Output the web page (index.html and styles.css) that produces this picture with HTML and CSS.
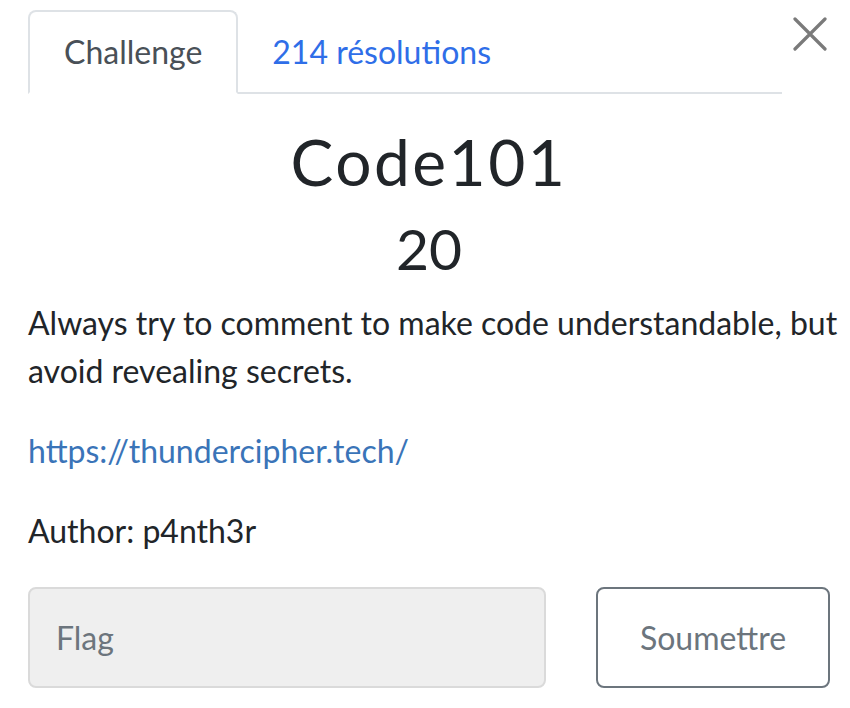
FILE: index.html
```html
<!DOCTYPE html>
<html lang="fr">
<head>
<meta charset="utf-8">
<title>Code101</title>
<link rel="stylesheet" href="styles.css">
</head>
<body>
<div class="modal">
  <div class="header">
    <nav class="tabs">
      <span class="tab active">Challenge</span>
      <span class="tab link">214 résolutions</span>
    </nav>
    <button class="close" aria-label="Close">
      <svg width="34" height="34" viewBox="0 0 34 34"><path d="M2 2 L32 32 M32 2 L2 32" stroke="#7a7a7a" stroke-width="3.2" stroke-linecap="round"/></svg>
    </button>
  </div>
  <h2 class="title">Code101</h2>
  <h3 class="value">20</h3>
  <div class="desc">
    <p>Always try to comment to make code understandable, but avoid revealing secrets.</p>
    <p><a href="#">https://thundercipher.tech/</a></p>
    <p>Author: p4nth3r</p>
  </div>
  <form class="submit-row">
    <input class="flag" type="text" placeholder="Flag">
    <button type="button" class="submit">Soumettre</button>
  </form>
</div>
</body>
</html>
```
FILE: styles.css
```css
* { box-sizing: border-box; }
html, body { margin: 0; padding: 0; background: #fff; }
body { font-family: Lato, "Open Sans", sans-serif; color: #212529; }
.modal { padding: 10px 8px 0 28px; width: 850px; }
.header { display: flex; align-items: flex-start; padding-right: 12px; }
.tabs { flex: 1; display: flex; border-bottom: 2px solid #dee2e6; height: 84px; }
.tab { font-size: 32px; padding: 0 34px 2px; display: flex; align-items: center; height: 84px; }
.tab.active { border: 2px solid #dee2e6; border-bottom-color: #fff; border-radius: 8px 8px 0 0; color: #495057; height: 84px; background: #fff; }
.tab.link { color: #2f6ee8; }
.close { background: none; border: 0; padding: 0; margin: 7px 0 0 8px; width: 40px; display: flex; justify-content: center; }
.title { font-size: 64px; font-weight: 400; letter-spacing: 2.5px; text-align: center; margin: 30px 12px 0 0; line-height: 1.2; }
.value { font-size: 57px; font-weight: 400; text-align: center; margin: 13px 12px 0 0; line-height: 1.2; }
.desc { font-size: 32px; line-height: 48px; margin-top: 17px; }
.desc p { margin: 0 0 32px; }
.desc a { color: #3a74b8; text-decoration: none; }
.submit-row { display: flex; gap: 50px; margin-top: 0; }
.flag { width: 518px; height: 101px; background: #efefef; border: 2px solid #dadada; border-radius: 8px; font-family: inherit; font-size: 32px; padding: 0 26px; color: #495057; }
.flag::placeholder { color: #6c757d; }
.submit { width: 234px; height: 101px; background: #fff; border: 2px solid #6c757d; border-radius: 8px; font-family: inherit; font-size: 32px; color: #6c757d; }
```
